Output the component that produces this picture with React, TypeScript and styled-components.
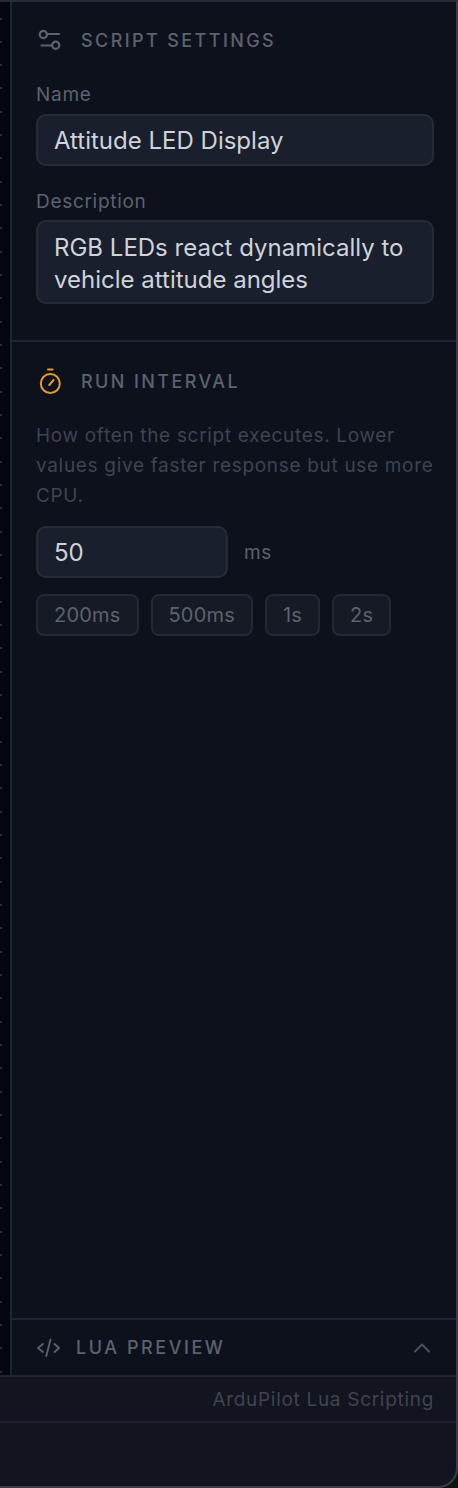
import React from 'react'
import styled, { createGlobalStyle } from 'styled-components'

const GlobalStyle = createGlobalStyle`
  html, body {
    margin: 0;
    padding: 0;
    background: #14120f;
  }
  * {
    box-sizing: border-box;
  }
`

const Window = styled.div`
  width: 458px;
  height: 1488px;
  display: flex;
  flex-direction: column;
  overflow: hidden;
  font-family: Inter, 'Liberation Sans', sans-serif;
  background: #12151f;
  border-top: 2px solid #252a37;
  border-right: 2px solid #3a3d46;
  border-bottom: 2px solid #3a3d46;
  border-bottom-right-radius: 20px;
`

const Body = styled.div`
  flex: 1;
  display: flex;
  min-height: 0;
`

const Canvas = styled.div`
  width: 10px;
  flex-shrink: 0;
  background: repeating-linear-gradient(
      to bottom,
      transparent 0,
      transparent 15.5px,
      #2b2f3b 15.5px,
      #2b2f3b 17.5px,
      transparent 17.5px,
      transparent 23.33px
    )
    0 0 / 2px 100% no-repeat,
    #05060f;
`

const Panel = styled.aside`
  flex: 1;
  display: flex;
  flex-direction: column;
  min-width: 0;
  background: #0d111c;
  border-left: 2px solid #1f2430;
`

const Section = styled.section`
  padding: 0 22px 0 24px;
`

const SettingsSection = styled(Section)`
  padding-top: 23px;
  padding-bottom: 36px;
  border-bottom: 2px solid #1f2430;
`

const SectionTitle = styled.div`
  display: flex;
  align-items: center;
  gap: 17px;
  height: 30px;
  font-size: 18px;
  font-weight: 500;
  letter-spacing: 2.4px;
  text-transform: uppercase;
  color: #5d626e;
`

const Label = styled.label`
  display: block;
  margin-top: 23px;
  margin-bottom: 5px;
  font-size: 19px;
  line-height: 26px;
  letter-spacing: 0.7px;
  color: #5d626e;
`

const FirstLabel = styled(Label)`
  margin-top: 27px;
  margin-bottom: 6px;
`

const fieldStyle = `
  display: block;
  font-family: Inter, 'Liberation Sans', sans-serif;
  font-size: 24px;
  letter-spacing: 0;
  color: #cfd2d9;
  background: #191f2c;
  border: 2px solid #262b38;
  border-radius: 10px;
  outline: none;
`

const TextInput = styled.input`
  ${fieldStyle}
  width: 100%;
  height: 52px;
  padding: 0 16px;
`

const TextArea = styled.textarea`
  ${fieldStyle}
  width: 100%;
  height: 84px;
  padding: 10px 16px;
  line-height: 32px;
  resize: none;
  overflow: hidden;
`

const IntervalSection = styled(Section)`
  flex: 1;
  padding-top: 24px;
`

const Help = styled.p`
  margin: 25px -4px 15px 0;
  font-size: 19px;
  line-height: 30px;
  letter-spacing: 0.68px;
  color: #3f444f;
`

const IntervalRow = styled.div`
  display: flex;
  align-items: center;
  gap: 16px;
`

const IntervalInput = styled(TextInput)`
  width: 192px;
`

const Unit = styled.span`
  font-size: 19px;
  letter-spacing: 0.7px;
  color: #5d626e;
`

const Presets = styled.div`
  display: flex;
  gap: 12px;
  margin-top: 16px;
`

const Preset = styled.button`
  height: 42px;
  padding: 0 16px;
  font-family: inherit;
  font-size: 20px;
  letter-spacing: 0.2px;
  color: #5d626e;
  background: #151a25;
  border: 2px solid #232834;
  border-radius: 8px;
`

const PreviewBar = styled.div`
  display: flex;
  align-items: center;
  gap: 14px;
  height: 57px;
  padding: 0 26px 0 24px;
  border-top: 2px solid #1f2430;
  font-size: 18px;
  font-weight: 500;
  letter-spacing: 2.55px;
  text-transform: uppercase;
  color: #5d626e;
`

const PreviewLabel = styled.span`
  flex: 1;
`

const Footer = styled.footer`
  height: 48px;
  display: flex;
  align-items: center;
  justify-content: flex-end;
  padding: 0 22px;
  border-top: 2px solid #1f2430;
  border-bottom: 2px solid #1c202c;
  font-size: 19px;
  letter-spacing: 0.7px;
  color: #3f444f;
`

const BottomBar = styled.div`
  height: 63px;
`

const SlidersIcon = () => (
  <svg width="28" height="28" viewBox="0 0 28 28" fill="none" stroke="#5d626e" strokeWidth="2.2" strokeLinecap="round">
    <circle cx="7.3" cy="8.5" r="3.6" />
    <path d="M11.5 8h11.5" />
    <circle cx="19.7" cy="19.3" r="3.6" />
    <path d="M5.5 19.5h10" />
  </svg>
)

const TimerIcon = () => (
  <svg width="28" height="28" viewBox="0 0 28 28" fill="none" stroke="#e69b2e" strokeWidth="2" strokeLinecap="round">
    <circle cx="14.3" cy="16.5" r="9.5" />
    <path d="M12 2.5h4.5" />
    <path d="M13.3 18l4.2-5" />
  </svg>
)

const CodeIcon = () => (
  <svg width="26" height="26" viewBox="0 0 26 26" fill="none" stroke="#5d626e" strokeWidth="1.8" strokeLinecap="round" strokeLinejoin="round">
    <path d="M7 9l-5 4 5 4" />
    <path d="M18.5 9l4.5 4-4.5 4" />
    <path d="M14.5 4.5L10.3 21" />
  </svg>
)

const ChevronUpIcon = () => (
  <svg width="16" height="10" viewBox="0 0 16 10" fill="none" stroke="#4c515d" strokeWidth="2" strokeLinecap="round" strokeLinejoin="round">
    <path d="M1 8.5L8 1.5l7 7" />
  </svg>
)

const PRESETS = ['200ms', '500ms', '1s', '2s']

export default function App() {
  return (
    <>
      <GlobalStyle />
      <Window>
        <Body>
          <Canvas />
          <Panel>
            <SettingsSection>
              <SectionTitle>
                <SlidersIcon />
                Script Settings
              </SectionTitle>
              <FirstLabel>Name</FirstLabel>
              <TextInput value="Attitude LED Display" readOnly />
              <Label>Description</Label>
              <TextArea value="RGB LEDs react dynamically to vehicle attitude angles" readOnly />
            </SettingsSection>
            <IntervalSection>
              <SectionTitle>
                <TimerIcon />
                Run Interval
              </SectionTitle>
              <Help>How often the script executes. Lower values give faster response but use more CPU.</Help>
              <IntervalRow>
                <IntervalInput value="50" readOnly />
                <Unit>ms</Unit>
              </IntervalRow>
              <Presets>
                {PRESETS.map((p) => (
                  <Preset key={p}>{p}</Preset>
                ))}
              </Presets>
            </IntervalSection>
            <PreviewBar>
              <CodeIcon />
              <PreviewLabel>Lua Preview</PreviewLabel>
              <ChevronUpIcon />
            </PreviewBar>
          </Panel>
        </Body>
        <Footer>ArduPilot Lua Scripting</Footer>
        <BottomBar />
      </Window>
    </>
  )
}
